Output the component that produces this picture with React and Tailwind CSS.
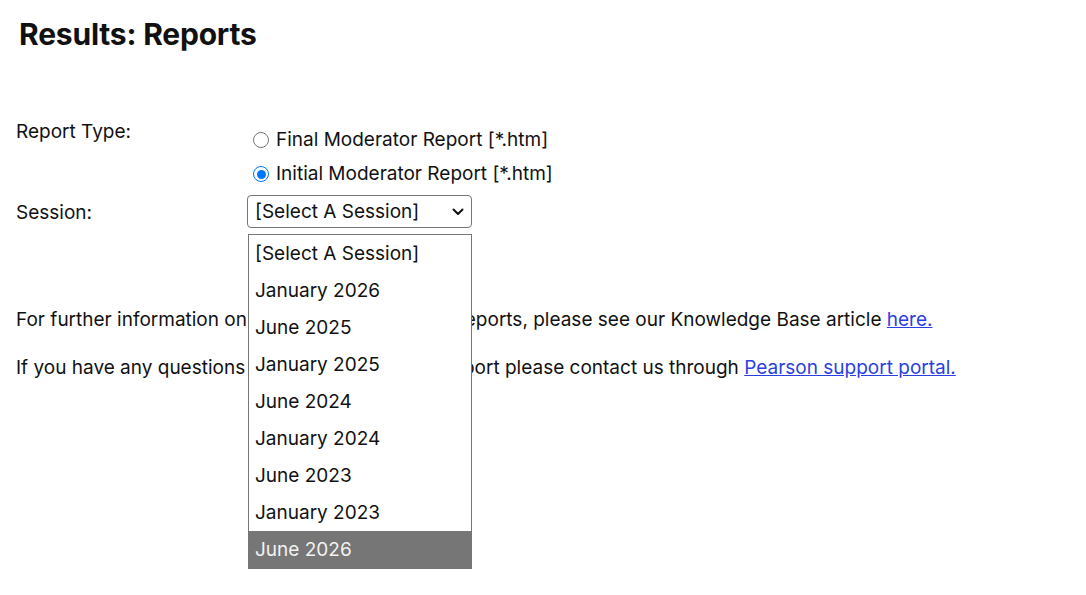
import React from "react";

const sessions = [
  "[Select A Session]",
  "January 2026",
  "June 2025",
  "January 2025",
  "June 2024",
  "January 2024",
  "June 2023",
  "January 2023",
  "June 2026",
];

export default function App() {
  return (
    <div className="min-h-[595px] w-[1086px] bg-white text-[#111] font-['Inter',sans-serif]">
      <h1 className="pl-[19px] pt-[16px] text-[30px] font-bold leading-[36px] tracking-[-0.2px]">
        Results: Reports
      </h1>
      <div className="relative mt-[56px] pl-[16px] text-[19px] leading-[24px]">
        <div className="flex">
          <div className="w-[231px] pt-[12px]">Report Type:</div>
          <div className="flex flex-col pt-[15px]">
            <label className="flex h-[34px] items-center gap-[7px] pl-[6px]">
              <span className="h-[16px] w-[16px] rounded-full border border-[#767676] bg-white" />
              <span>Final Moderator Report [*.htm]</span>
            </label>
            <label className="flex h-[34px] items-center gap-[7px] pl-[6px]">
              <span className="flex h-[16px] w-[16px] items-center justify-center rounded-full border-[1.5px] border-[#0075ff] bg-white">
                <span className="h-[9px] w-[9px] rounded-full bg-[#0075ff]" />
              </span>
              <span>Initial Moderator Report [*.htm]</span>
            </label>
          </div>
        </div>
        <div className="mt-[4px] flex">
          <div className="w-[231px] pt-[6px]">Session:</div>
          <div className="relative">
            <div className="flex h-[33px] w-[225px] items-center justify-between rounded-[4px] border border-[#767676] pl-[7px] pr-[6px]">
              <span>[Select A Session]</span>
              <svg width="14" height="14" viewBox="0 0 14 14" fill="none">
                <path d="M2.5 4.5 L7 9 L11.5 4.5" stroke="#111" strokeWidth="2" strokeLinecap="round" strokeLinejoin="round" />
              </svg>
            </div>
            <ul className="absolute left-[1px] top-[39px] z-10 w-[224px] border border-[#767676] bg-white">
              {sessions.map((s, i) => (
                <li
                  key={s}
                  className={
                    i === sessions.length - 1
                      ? "flex h-[37px] items-center bg-[#767676] pl-[6px] text-[#f2f2f2]"
                      : "flex h-[37px] items-center pl-[6px]"
                  }
                >
                  {s}
                </li>
              ))}
            </ul>
          </div>
        </div>
        <p className="mt-[80px]">
          For further information on Initial/Final Moderator Reports, please see our Knowledge Base article{" "}
          <a href="#" className="text-[#2b3fe0] underline">here.</a>
        </p>
        <p className="mt-[24px]">
          If you have any questions about the Moderator Report please contact us through{" "}
          <a href="#" className="text-[#2b3fe0] underline">Pearson support portal.</a>
        </p>
      </div>
    </div>
  );
}
